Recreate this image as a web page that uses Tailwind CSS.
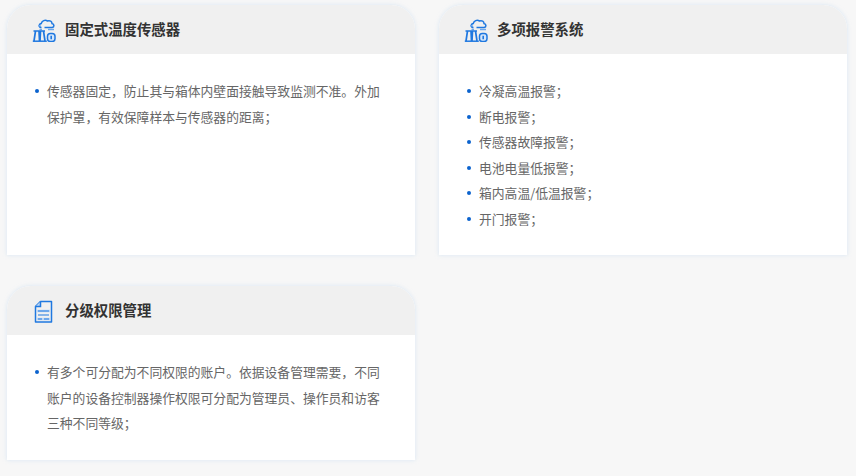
<!DOCTYPE html>
<html lang="zh-CN">
<head>
<meta charset="utf-8">
<script src="https://cdn.jsdelivr.net/npm/@tailwindcss/browser@4"></script>
</head>
<body class="w-[856px] h-[476px] overflow-hidden bg-[#f7f7f7] font-['Noto_Sans_CJK_SC','Noto_Sans',sans-serif]">
<div class="grid grid-cols-[408px_408px] gap-x-[24px] gap-y-[31px] pl-[7px] pt-[5px] items-start">

  <section class="h-[250px] bg-white rounded-t-[24px] shadow-[0_0_4px_rgba(190,215,240,0.55)]">
    <header class="h-[49px] flex items-center pl-[25px] gap-[9px] bg-[#f0f0f0] rounded-t-[24px]">
      <svg class="w-[24px] h-[24px] shrink-0" viewBox="0 0 24 24" fill="none" stroke="#1f78e0" stroke-width="1.500"><path d="M9.500 9.500c-2.800 0-2.800-3.700-.3-4C10 2.800 13 1.500 15.500 3c2.500-.8 4.500.5 4.500 2.500 2.500.4 2.500 3.700.2 4H12.500"/><path d="M6 7.800h2.500M7.500 11.500h2.500M16 11.500h6" stroke="#6ea8ec"/><path d="M.8 23.200h14"/><path d="M1.500 13h11.500M3.500 13 2 23M7 13l.5 10M8.500 13 8 23M11.500 13l1.500 10" stroke-width="1.700"/><rect x="15.500" y="15.500" width="7.500" height="8" rx="2.800" fill="#d5e6fa"/><path d="M19.200 17.800v3.400" stroke-width="1.600"/></svg>
      <h3 class="mb-[2px] text-[14.4px] leading-[24px] font-semibold text-[#333]">固定式温度传感器</h3>
    </header>
    <ul class="pt-[24px] pl-[40px] pr-[30px] text-[12.8px] leading-[25.6px] text-[#666]">
      <li class="relative before:content-[''] before:absolute before:left-[-12px] before:top-[11px] before:w-[4px] before:h-[4px] before:rounded-full before:bg-[#0b63ce]">传感器固定，防止其与箱体内壁面接触导致监测不准。外加保护罩，有效保障样本与传感器的距离；</li>
    </ul>
  </section>

  <section class="h-[250px] bg-white rounded-t-[24px] shadow-[0_0_4px_rgba(190,215,240,0.55)]">
    <header class="h-[49px] flex items-center pl-[25px] gap-[9px] bg-[#f0f0f0] rounded-t-[24px]">
      <svg class="w-[24px] h-[24px] shrink-0" viewBox="0 0 24 24" fill="none" stroke="#1f78e0" stroke-width="1.500"><path d="M9.500 9.500c-2.800 0-2.800-3.700-.3-4C10 2.800 13 1.500 15.500 3c2.500-.8 4.500.5 4.500 2.500 2.500.4 2.500 3.700.2 4H12.500"/><path d="M6 7.800h2.500M7.500 11.500h2.500M16 11.500h6" stroke="#6ea8ec"/><path d="M.8 23.200h14"/><path d="M1.500 13h11.500M3.500 13 2 23M7 13l.5 10M8.500 13 8 23M11.500 13l1.500 10" stroke-width="1.700"/><rect x="15.500" y="15.500" width="7.500" height="8" rx="2.800" fill="#d5e6fa"/><path d="M19.200 17.800v3.400" stroke-width="1.600"/></svg>
      <h3 class="mb-[2px] text-[14.4px] leading-[24px] font-semibold text-[#333]">多项报警系统</h3>
    </header>
    <ul class="pt-[24px] pl-[40px] pr-[30px] text-[12.8px] leading-[25.6px] text-[#666]">
      <li class="relative before:content-[''] before:absolute before:left-[-12px] before:top-[11px] before:w-[4px] before:h-[4px] before:rounded-full before:bg-[#0b63ce]">冷凝高温报警；</li>
      <li class="relative before:content-[''] before:absolute before:left-[-12px] before:top-[11px] before:w-[4px] before:h-[4px] before:rounded-full before:bg-[#0b63ce]">断电报警；</li>
      <li class="relative before:content-[''] before:absolute before:left-[-12px] before:top-[11px] before:w-[4px] before:h-[4px] before:rounded-full before:bg-[#0b63ce]">传感器故障报警；</li>
      <li class="relative before:content-[''] before:absolute before:left-[-12px] before:top-[11px] before:w-[4px] before:h-[4px] before:rounded-full before:bg-[#0b63ce]">电池电量低报警；</li>
      <li class="relative before:content-[''] before:absolute before:left-[-12px] before:top-[11px] before:w-[4px] before:h-[4px] before:rounded-full before:bg-[#0b63ce]">箱内高温/低温报警；</li>
      <li class="relative before:content-[''] before:absolute before:left-[-12px] before:top-[11px] before:w-[4px] before:h-[4px] before:rounded-full before:bg-[#0b63ce]">开门报警；</li>
    </ul>
  </section>

  <section class="h-[174px] bg-white rounded-t-[24px] shadow-[0_0_4px_rgba(190,215,240,0.55)]">
    <header class="h-[49px] flex items-center pl-[25px] gap-[9px] bg-[#f0f0f0] rounded-t-[24px]">
      <svg class="w-[24px] h-[24px] shrink-0" viewBox="0 0 24 24" fill="none" stroke="#1f78e0" stroke-width="1.500"><path d="M8.500 2.500h11v20.500H3.500V7.500z" stroke-linejoin="round"/><path d="M8.500 2.500v5h-5" fill="#bcd6f5"/><path d="M5 12h13M5 20h13" stroke="#bcd6f5" stroke-width="2.500"/><path d="M6 12h11M6 16h11M6 20h4M12 20h5" stroke-width="1"/></svg>
      <h3 class="mb-[2px] text-[14.4px] leading-[24px] font-semibold text-[#333]">分级权限管理</h3>
    </header>
    <ul class="pt-[24px] pl-[40px] pr-[30px] text-[12.8px] leading-[25.6px] text-[#666]">
      <li class="relative before:content-[''] before:absolute before:left-[-12px] before:top-[11px] before:w-[4px] before:h-[4px] before:rounded-full before:bg-[#0b63ce]">有多个可分配为不同权限的账户。依据设备管理需要，不同账户的设备控制器操作权限可分配为管理员、操作员和访客三种不同等级；</li>
    </ul>
  </section>

</div>
</body>
</html>
